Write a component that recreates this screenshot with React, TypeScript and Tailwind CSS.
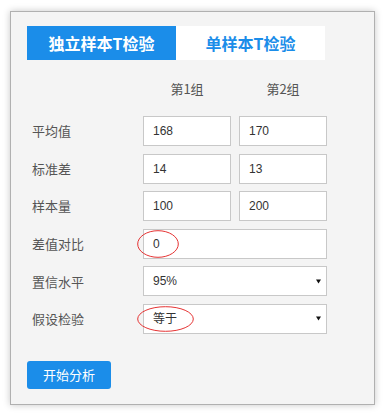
import React from "react";

const font = { fontFamily: '"Noto Sans CJK SC", "Noto Sans", Arial, sans-serif' };
const inputFont = { fontFamily: '"Liberation Sans", "Noto Sans CJK SC", Arial, sans-serif' };

function Ellipse({ c }: { c: { w: number; h: number; top: number } }) {
  return (
    <svg className="absolute pointer-events-none" style={{ left: -7, top: c.top }} width={c.w} height={c.h}>
      <ellipse cx={c.w / 2} cy={c.h / 2} rx={c.w / 2 - 0.7} ry={c.h / 2 - 0.7} fill="none" stroke="#e53333" strokeWidth="1" />
    </svg>
  );
}

function Field({ value, wide, circle }: { value: string; wide?: boolean; circle?: { w: number; h: number; top: number } }) {
  return (
    <div
      className={`relative h-[30px] ${wide ? "w-[184px]" : "w-[88px]"} border border-[#c8c8c8] bg-white flex items-center pl-[9px] text-[12px] text-[#333]`}
      style={inputFont}
    >
      <span>{value}</span>
      {circle && <Ellipse c={circle} />}
    </div>
  );
}

function SelectBox({ value, circle }: { value: string; circle?: { w: number; h: number; top: number } }) {
  return (
    <div
      className="relative h-[30px] w-[184px] border border-[#c8c8c8] bg-white flex items-center justify-between pl-[9px] pr-[5px] text-[12px] text-[#333]"
      style={inputFont}
    >
      <span>{value}</span>
      <svg width="5" height="5" viewBox="0 0 5 5">
        <path d="M0 0.5 H5 L2.5 4.5 Z" fill="#111" />
      </svg>
      {circle && <Ellipse c={circle} />}
    </div>
  );
}

function Row({ label, children }: { label: string; children: React.ReactNode }) {
  return (
    <div className="flex items-center h-[30px]">
      <div className="w-[116px] pl-[5px] text-[13px] text-[#555]">{label}</div>
      <div className="flex gap-[8px]">{children}</div>
    </div>
  );
}

export default function App() {
  return (
    <div className="w-[388px] h-[417px] bg-white pt-[11px] pl-[10px]" style={font}>
      <div className="w-[365px] h-[394px] border border-[#b0b0b0] bg-[#f4f4f4] shadow-[0_0_7px_rgba(0,0,0,0.22)] pt-[14px] pl-[16px]">
        <div className="flex h-[34px] w-[298px]">
          <div className="w-[149px] bg-[#1b8de9] text-white font-bold text-[16px] flex items-center justify-center">独立样本T检验</div>
          <div className="w-[149px] bg-white text-[#1b8de9] font-bold text-[16px] flex items-center justify-center">单样本T检验</div>
        </div>
        <div className="flex mt-[20px] mb-[18px] h-[18px] items-center text-[13px] text-[#555]">
          <div className="w-[116px]" />
          <div className="w-[88px] text-center">第1组</div>
          <div className="w-[8px]" />
          <div className="w-[88px] text-center">第2组</div>
        </div>
        <div className="flex flex-col gap-[7.6px]">
          <Row label="平均值">
            <Field value="168" />
            <Field value="170" />
          </Row>
          <Row label="标准差">
            <Field value="14" />
            <Field value="13" />
          </Row>
          <Row label="样本量">
            <Field value="100" />
            <Field value="200" />
          </Row>
          <Row label="差值对比">
            <Field value="0" wide circle={{ w: 42, h: 28, top: 0 }} />
          </Row>
          <Row label="置信水平">
            <SelectBox value="95%" />
          </Row>
          <Row label="假设检验">
            <SelectBox value="等于" circle={{ w: 57, h: 26, top: 1 }} />
          </Row>
        </div>
        <button className="mt-[27px] w-[84px] h-[28px] rounded-[3px] bg-[#1b8de9] text-white text-[13px] flex items-center justify-center">
          开始分析
        </button>
      </div>
    </div>
  );
}
